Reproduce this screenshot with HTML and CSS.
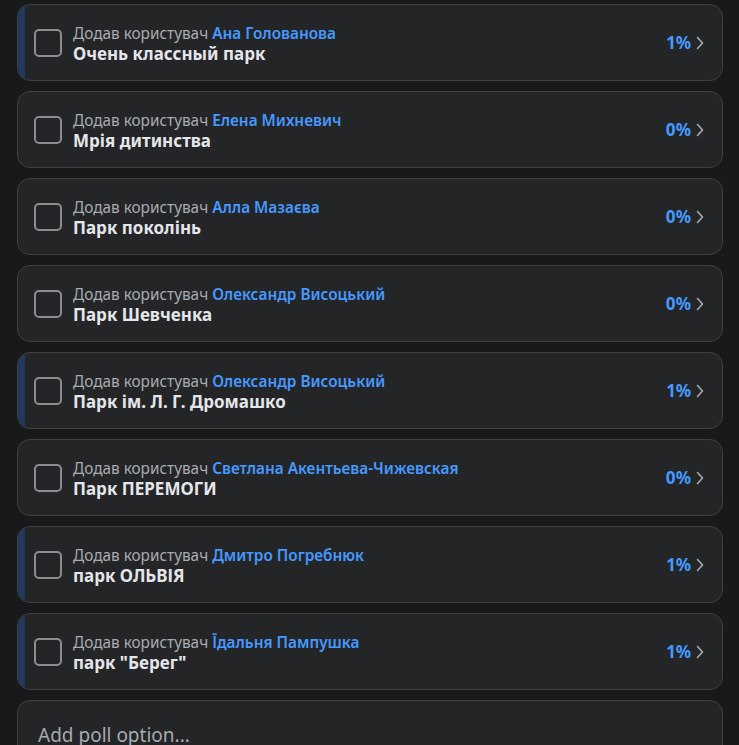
FILE: index.html
```html
<!DOCTYPE html>
<html lang="uk">
<head>
<meta charset="utf-8">
<link rel="stylesheet" href="styles.css">
</head>
<body>
<div class="list">
  <div class="opt">
    <div class="fill" style="width:1%"></div>
    <span class="box"></span>
    <div class="txt">
      <div class="by">Додав користувач <span class="name">Ана Голованова</span></div>
      <div class="title">Очень классный парк</div>
    </div>
    <span class="pct">1%</span>
    <svg class="chev" viewBox="0 0 8 14" width="8" height="14"><path d="M1.5 1.5 L6.5 7 L1.5 12.5" /></svg>
  </div>
  <div class="opt">
    <span class="box"></span>
    <div class="txt">
      <div class="by">Додав користувач <span class="name">Елена Михневич</span></div>
      <div class="title">Мрія дитинства</div>
    </div>
    <span class="pct">0%</span>
    <svg class="chev" viewBox="0 0 8 14" width="8" height="14"><path d="M1.5 1.5 L6.5 7 L1.5 12.5" /></svg>
  </div>
  <div class="opt">
    <span class="box"></span>
    <div class="txt">
      <div class="by">Додав користувач <span class="name">Алла Мазаєва</span></div>
      <div class="title">Парк поколінь</div>
    </div>
    <span class="pct">0%</span>
    <svg class="chev" viewBox="0 0 8 14" width="8" height="14"><path d="M1.5 1.5 L6.5 7 L1.5 12.5" /></svg>
  </div>
  <div class="opt">
    <span class="box"></span>
    <div class="txt">
      <div class="by">Додав користувач <span class="name">Олександр Висоцький</span></div>
      <div class="title">Парк Шевченка</div>
    </div>
    <span class="pct">0%</span>
    <svg class="chev" viewBox="0 0 8 14" width="8" height="14"><path d="M1.5 1.5 L6.5 7 L1.5 12.5" /></svg>
  </div>
  <div class="opt">
    <div class="fill" style="width:1%"></div>
    <span class="box"></span>
    <div class="txt">
      <div class="by">Додав користувач <span class="name">Олександр Висоцький</span></div>
      <div class="title">Парк ім. Л. Г. Дромашко</div>
    </div>
    <span class="pct">1%</span>
    <svg class="chev" viewBox="0 0 8 14" width="8" height="14"><path d="M1.5 1.5 L6.5 7 L1.5 12.5" /></svg>
  </div>
  <div class="opt">
    <span class="box"></span>
    <div class="txt">
      <div class="by">Додав користувач <span class="name">Светлана Акентьева-Чижевская</span></div>
      <div class="title">Парк ПЕРЕМОГИ</div>
    </div>
    <span class="pct">0%</span>
    <svg class="chev" viewBox="0 0 8 14" width="8" height="14"><path d="M1.5 1.5 L6.5 7 L1.5 12.5" /></svg>
  </div>
  <div class="opt">
    <div class="fill" style="width:1%"></div>
    <span class="box"></span>
    <div class="txt">
      <div class="by">Додав користувач <span class="name">Дмитро Погребнюк</span></div>
      <div class="title">парк ОЛЬВІЯ</div>
    </div>
    <span class="pct">1%</span>
    <svg class="chev" viewBox="0 0 8 14" width="8" height="14"><path d="M1.5 1.5 L6.5 7 L1.5 12.5" /></svg>
  </div>
  <div class="opt">
    <div class="fill" style="width:1%"></div>
    <span class="box"></span>
    <div class="txt">
      <div class="by">Додав користувач <span class="name">Їдальня Пампушка</span></div>
      <div class="title">парк "Берег"</div>
    </div>
    <span class="pct">1%</span>
    <svg class="chev" viewBox="0 0 8 14" width="8" height="14"><path d="M1.5 1.5 L6.5 7 L1.5 12.5" /></svg>
  </div>
  <div class="add">Add poll option...</div>
</div>
</body>
</html>
```
FILE: styles.css
```css
html, body {
  margin: 0;
  background: #18191a;
  height: 100%;
  overflow: hidden;
}
body {
  font-family: "Noto Sans", "Open Sans", sans-serif;
}
.list {
  display: flex;
  flex-direction: column;
  gap: 10px;
  padding: 4px 16px 0 17px;
}
.opt {
  position: relative;
  overflow: hidden;
  display: flex;
  align-items: center;
  height: 77px;
  box-sizing: border-box;
  background: #242526;
  border: 1px solid #3e4042;
  border-radius: 13px;
  padding: 0 17px 0 16px;
}
.fill {
  position: absolute;
  left: 0;
  top: 0;
  bottom: 0;
  background: #213a5c;
}
.box {
  position: relative;
  flex: none;
  width: 28px;
  height: 28px;
  box-sizing: border-box;
  border: 2px solid #8a8d91;
  border-radius: 5px;
  margin-right: 11px;
}
.txt {
  position: relative;
  flex: 1;
  min-width: 0;
  padding-top: 2px;
}
.by {
  font-size: 15.35px;
  line-height: 20px;
  color: #a8abaf;
}
.name {
  color: #4599ff;
  font-weight: 600;
}
.title {
  font-size: 17px;
  line-height: 22px;
  font-weight: 700;
  color: #e4e6eb;
}
.pct {
  position: relative;
  font-size: 17px;
  font-weight: 700;
  color: #4599ff;
  margin-right: 5px;
  font-variant-numeric: proportional-nums;
}
.chev {
  position: relative;
  fill: none;
  stroke: #a8abaf;
  stroke-width: 1.6;
  stroke-linecap: round;
  stroke-linejoin: round;
  margin-right: 1px;
}
.add {
  height: 77px;
  box-sizing: border-box;
  background: #242526;
  border: 1px solid #3e4042;
  border-radius: 13px;
  padding: 22px 20px;
  font-size: 19px;
  line-height: 24px;
  color: #a8abaf;
}
```
